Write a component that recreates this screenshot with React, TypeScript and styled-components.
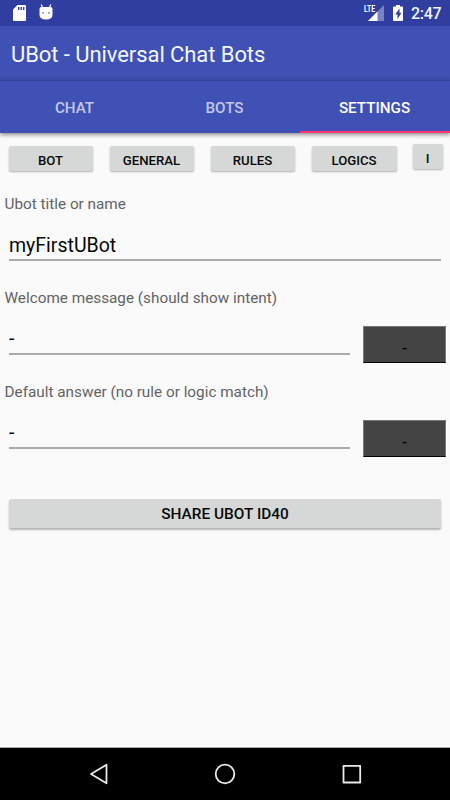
import React from "react";
import styled, { createGlobalStyle } from "styled-components";

const GlobalStyle = createGlobalStyle`
  * { box-sizing: border-box; }
  body { margin: 0; background: #fafafa; font-family: Roboto, sans-serif; }
`;

const Screen = styled.div`
  width: 450px;
  height: 800px;
  display: flex;
  flex-direction: column;
  background: #fafafa;
  overflow: hidden;
`;

const StatusBar = styled.div`
  height: 26px;
  flex: none;
  display: flex;
  align-items: center;
  justify-content: space-between;
  background: #303e9f;
`;

const StatusIcon = styled.svg`
  display: block;
  flex: none;
`;

const StatusGroup = styled.div`
  display: flex;
  height: 26px;
`;

const Clock = styled.span`
  width: 39px;
  color: #f4f5fb;
  font-size: 16px;
  font-weight: 500;
  line-height: 28px;
  letter-spacing: -0.3px;
`;

const Toolbar = styled.header`
  height: 55px;
  flex: none;
  padding-left: 11px;
  color: #f5f6fc;
  background: linear-gradient(#3f51b5 50px, #3a4aa4 54px, #35449a 55px);
  font-size: 22px;
  line-height: 58px;
  letter-spacing: -0.07px;
`;

const TabBar = styled.nav`
  height: 52px;
  flex: none;
  display: grid;
  grid-template-columns: repeat(3, 1fr);
  background: #3f51b5;
  box-shadow: 0 2px 4px rgba(0, 0, 0, 0.42);
`;

const Tab = styled.div<{ $active?: boolean }>`
  height: 52px;
  padding: 2px 1px 0 0;
  text-align: center;
  color: ${(p) => (p.$active ? "#ffffff" : "#c3c8e7")};
  border-bottom: 2px solid ${(p) => (p.$active ? "#ff3371" : "#3f51b5")};
  font-size: 15.2px;
  font-weight: 500;
  line-height: 50px;
`;

const Content = styled.main`
  flex: 1;
  display: flex;
  flex-direction: column;
`;

const RaisedButton = styled.button`
  border: 0;
  padding: 0;
  border-radius: 2px;
  color: #090909;
  background: #d6d8d7;
  box-shadow: 0 1px 2px rgba(0, 0, 0, 0.3);
  font-family: Roboto, sans-serif;
  font-weight: 500;
`;

const ButtonRow = styled.div`
  height: 48px;
  display: grid;
  grid-template-columns: 84px 84px 84px 85px 29px;
  column-gap: 17px;
  padding: 13px 0 0 8.5px;
`;

const SectionButton = styled(RaisedButton)`
  height: 25px;
  font-size: 13.2px;
  line-height: 29px;
`;

const InfoButton = styled(SectionButton)`
  margin: -2px 0 0 -1px;
`;

const Field = styled.section`
  height: 94px;
  padding: 13px 4px 0 4.5px;
`;

const FieldLabel = styled.div`
  height: 20px;
  color: #646464;
  font-size: 15.3px;
  line-height: 20px;
`;

const FieldRow = styled.div`
  display: flex;
  justify-content: space-between;
  padding: 18px 0 0 4.5px;
`;

const TextLine = styled.div<{ $wide?: boolean }>`
  width: ${(p) => (p.$wide ? 432 : 341)}px;
  height: ${(p) => (p.$wide ? 24 : 29)}px;
  margin-top: ${(p) => (p.$wide ? 5 : 0)}px;
  overflow: hidden;
  color: #080808;
  border-bottom: 2px solid #aaa;
  font-size: 19.5px;
  line-height: ${(p) => (p.$wide ? 17 : 26)}px;
`;

const DarkButton = styled.button`
  width: 83px;
  height: 37px;
  padding: 7px 0 0;
  color: #000;
  background: #444;
  border: 1px solid #777;
  border-bottom-color: #000;
  font: 500 15px/24px Roboto, sans-serif;
`;

const ShareButton = styled(RaisedButton)`
  width: 432px;
  height: 29px;
  margin: 36px 0 0 9px;
  box-shadow: 0 2px 2px rgba(0, 0, 0, 0.28);
  font-size: 15.4px;
  line-height: 31px;
`;

const NavigationBar = styled.footer`
  height: 53px;
  flex: none;
  border-top: 1px solid #aaa;
  background: #000;
`;

const SECTIONS = ["BOT", "GENERAL", "RULES", "LOGICS"];

export default function App() {
  return (
    <Screen>
      <GlobalStyle />
      <StatusBar>
        <StatusIcon width="60" height="26" viewBox="0 0 60 26" fill="#fff">
          <path d="M17.500 5H25q1 0 1 1v14q0 1-1 1H14q-1 0-1-1V9.500z" />
          <path d="M18 7h1.400v3H18zM20.500 7h1.400v3h-1.400zM23 7h1.400v3H23z" fill="#303e9f" />
          <path d="M41.200 4.500l1.300 3M50.800 4.500l-1.300 3" stroke="#fff" strokeWidth="1.200" />
          <path d="M39.500 9q0-2 2-2h9q2 0 2 2v5.500q0 5-6.500 5t-6.500-5z" />
          <circle cx="43" cy="13" r=".8" fill="#303e9f" />
          <circle cx="49" cy="13" r=".8" fill="#303e9f" />
        </StatusIcon>
        <StatusGroup>
          <StatusIcon width="49" height="26" viewBox="362 0 49 26" fill="#fff">
            <path d="M384 5v16h-16z" fill="#7983c2" />
            <path d="M377.500 11.500V21H368z" />
            <text x="364" y="12" fontSize="9.500" fontWeight="700" fontFamily="Roboto" textLength="11" lengthAdjust="spacingAndGlyphs" stroke="#303e9f" strokeWidth="1.500" paintOrder="stroke">LTE</text>
            <path d="M396 5h4v1.500h2q1 0 1 1V20q0 1-1 1h-8q-1 0-1-1V7.500q0-1 1-1h2z" />
            <path d="M399.500 8.500l-4.300 6h2.300v4.500l4-6.300h-2z" fill="#303e9f" />
          </StatusIcon>
          <Clock>2:47</Clock>
        </StatusGroup>
      </StatusBar>
      <Toolbar>UBot - Universal Chat Bots</Toolbar>
      <TabBar>
        <Tab>CHAT</Tab>
        <Tab>BOTS</Tab>
        <Tab $active>SETTINGS</Tab>
      </TabBar>
      <Content>
        <ButtonRow>
          {SECTIONS.map((name) => (
            <SectionButton key={name}>{name}</SectionButton>
          ))}
          <InfoButton>I</InfoButton>
        </ButtonRow>
        <Field>
          <FieldLabel>Ubot title or name</FieldLabel>
          <FieldRow>
            <TextLine $wide>myFirstUBot</TextLine>
          </FieldRow>
        </Field>
        <Field>
          <FieldLabel>Welcome message (should show intent)</FieldLabel>
          <FieldRow>
            <TextLine>-</TextLine>
            <DarkButton>-</DarkButton>
          </FieldRow>
        </Field>
        <Field>
          <FieldLabel>Default answer (no rule or logic match)</FieldLabel>
          <FieldRow>
            <TextLine>-</TextLine>
            <DarkButton>-</DarkButton>
          </FieldRow>
        </Field>
        <ShareButton>SHARE UBOT ID40</ShareButton>
      </Content>
      <NavigationBar>
        <StatusIcon width="450" height="52" viewBox="0 748 450 52" fill="none" stroke="#e9e9e9" strokeWidth="1.8" strokeLinejoin="round">
          <path d="M106.500 764.800v18.500L91 774z" />
          <circle cx="225" cy="774" r="9.300" />
          <path d="M343.500 765.800h16.700v16.700h-16.700z" />
        </StatusIcon>
      </NavigationBar>
    </Screen>
  );
}
